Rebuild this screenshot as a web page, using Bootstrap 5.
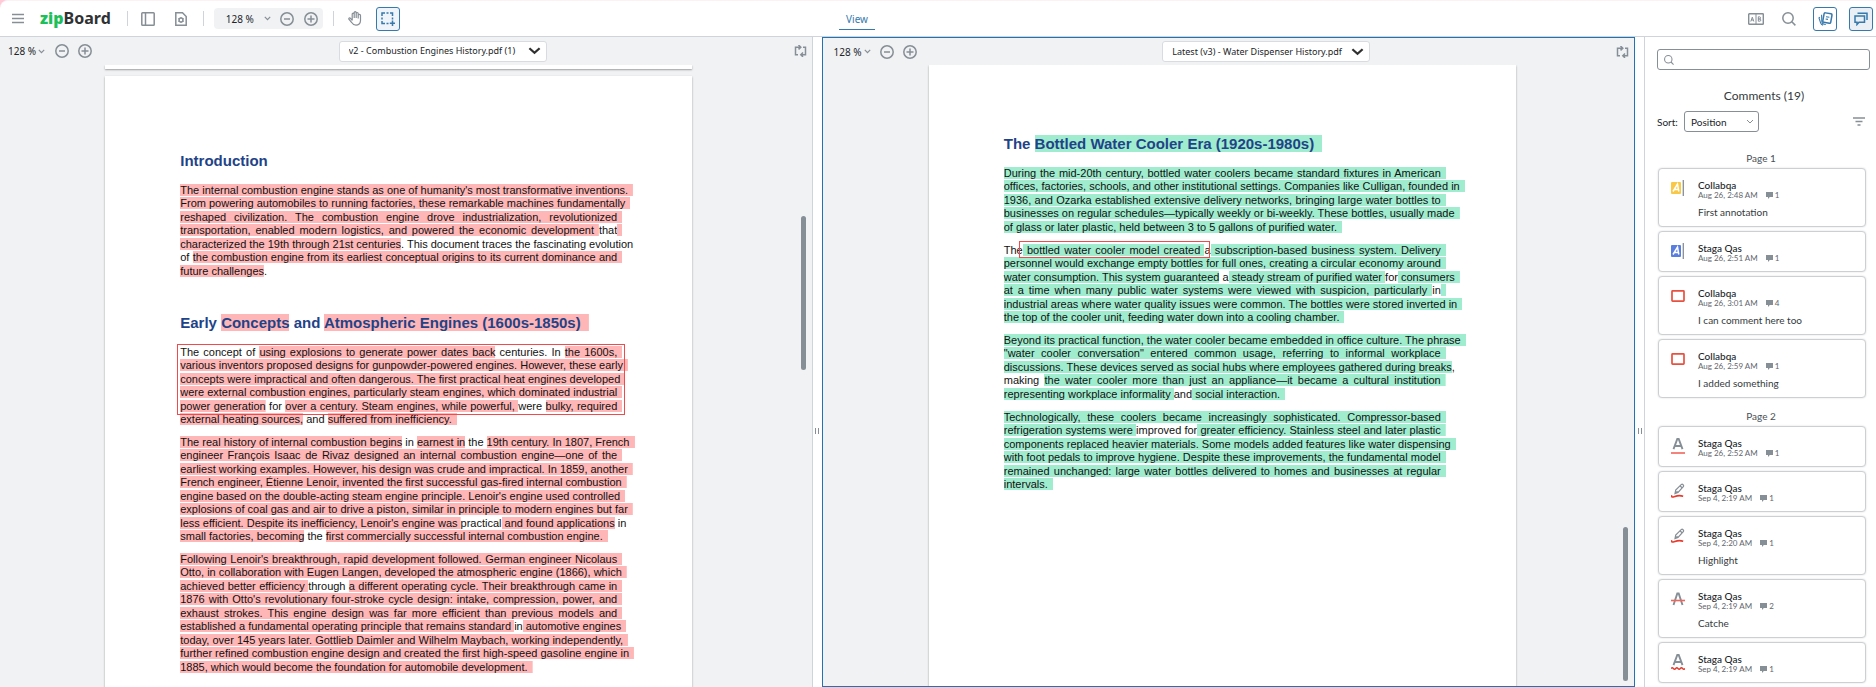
<!DOCTYPE html>
<html lang="en">
<head>
<meta charset="utf-8">
<meta name="viewport" content="width=device-width, initial-scale=1">
<title>zipBoard</title>
<link rel="stylesheet" href="https://cdn.jsdelivr.net/npm/bootstrap@5.3.0/dist/css/bootstrap.min.css">
<style>
:root { --line:#cfd4da; --ico:#868e96; --blue:#3579ad; --pane:#f1f2f4; --ink:#343a40; }
body { height:100vh; font-family:Lato,"Liberation Sans",sans-serif; font-size:10px; line-height:14px; color:#212529; background:#ffc9d6; }
svg { display:block; fill:none; stroke:var(--ico); stroke-width:1.5; flex:none; }
.shell { border-top:1px solid #fdf1f4; border-top-left-radius:8px; background:#fff; }
.topbar { height:36px; border-bottom:1px solid var(--line); padding:0 3px 0 12px; }
.topbar > .side { flex:1 1 0; }
.brand { font:bold 16px/20px "Noto Sans",sans-serif; color:#2f3133; text-decoration:none; margin-left:16px; padding-bottom:2px; }
.brand b { color:#1dbf5b; }
.ibtn { border:0; background:none; padding:0; display:flex; align-items:center; justify-content:center; }
.vsep { width:1px; height:15px; background:var(--line); }
.zoomset { font:10px/14px "Noto Sans",sans-serif; color:#212529; }
.zoomset .ibtn { color:inherit; gap:2px; }
.zoompill { background:var(--pane); border-radius:4px; height:21px; padding:0 5px 0 12px; width:109px; }
.sel { width:24px; height:24px; border:1px solid var(--blue); border-radius:3px; background:#eef4fa; }
.sel svg { stroke:var(--blue); }
.tab { font:10px/14px "Noto Sans",sans-serif; color:var(--blue); border-bottom:1px solid var(--blue); text-decoration:none; padding:0 7px 3px; margin:4px 171px 0 0; }
.pane { flex:1 1 0; min-width:0; background:var(--pane); position:relative; }
.pane.old { border-right:1px solid var(--line); }
.pane.now { flex-basis:2px; border:1px solid #2273b4; }
.panebar { height:28px; padding:0 5px 0 8px; }
.now .panebar { height:27px; padding-left:11px; }
.pick { width:208px; height:21px; min-height:0; padding:0 26px 0 9px; font:9px/18px "Noto Sans",sans-serif; color:#212529; border:1px solid #d8dce0; border-radius:3px;
  background-image:url("data:image/svg+xml,%3csvg xmlns='http://www.w3.org/2000/svg' viewBox='0 0 14 8'%3e%3cpath fill='none' stroke='%23303030' stroke-width='2.4' d='M1.5 1 7 6l5.5-5'/%3e%3c/svg%3e"); background-size:13px 8px; background-position:right 5px center; }
.scroller { overflow:hidden; padding-right:14px; }
.now .scroller { padding-right:12px; }
.sheet { width:587px; margin:0 auto; background:#fff; padding:0 75px; box-shadow:0 1px 2px rgba(0,0,0,.35); flex:none; }
.sheet.tail { height:4px; margin-bottom:7px; }
.sheet.main { padding-top:75px; height:1000px; }
.now .sheet.main { padding-top:69px; }
.thumb { position:absolute; right:6px; width:5px; height:154px; border-radius:3px; background:#868e96; }
.old .thumb { top:179px; } .now .thumb { bottom:5px; }
.grip { width:9px; background:#fff; }
.grip i { width:1px; height:6px; background:#868e96; }
.doc { font-family:"Liberation Sans",Arial,sans-serif; color:#111; }
.doc h2 { font-size:15px; line-height:20px; font-weight:bold; color:#1f4388; margin:0; }
.doc p { position:relative; margin:0 0 10px; font-size:11px; line-height:13px; }
.doc .ln { display:block; white-space:nowrap; text-align:justify; text-align-last:justify; }
.doc .ln:nth-of-type(even) { margin-bottom:1px; }
.doc .fin { text-align-last:left; }
.doc mark { color:inherit; padding:0; background:linear-gradient(var(--hl),var(--hl)) center / 100% 12px no-repeat; }
.doc h2 mark { background-size:100% 18px; }
.doc mark.e { padding-right:5px; margin-right:-5px; }
.doc h2 mark.e { padding-right:8px; }
.doc h2 + p { margin-top:13px; }
.doc p.intro { margin-bottom:35px; }
.old { --hl:#ffb6b6; } .now { --hl:#a0ecce; }
.note { position:absolute; border:1px solid #f04a4a; }
.note.big { left:-3px; right:-8px; top:-2px; height:71px; }
.note.slim { left:15px; width:191px; top:-3px; height:17px; }
.comments { width:232px; border-left:1px solid var(--line); padding:12px 6px 0 12px; background:#fff; overflow:hidden; }
.find { position:relative; }
.find svg { position:absolute; left:7px; top:6px; }
.find input { height:21px; min-height:0; border:1px solid #868e96; border-radius:3px; padding:0 6px 0 22px; font-size:10px; }
.comments h1 { font-size:12px; line-height:16px; margin:18px 0 0; color:#343a40; text-align:center; font-weight:400; padding-left:1px; }
.order { width:75px; height:21px; min-height:0; padding:0 18px 0 6px; font-size:10px; line-height:18px; color:#212529; border:1px solid #868e96; border-radius:3px;
  background-image:url("data:image/svg+xml,%3csvg xmlns='http://www.w3.org/2000/svg' viewBox='0 0 8 6'%3e%3cpath fill='none' stroke='%23868e96' d='M1 1l3 3 3-3'/%3e%3c/svg%3e"); background-size:8px 6px; background-position:right 4px center; }
.pg { font-size:10px; line-height:14px; color:#495057; text-align:center; margin:0 0 3px; font-weight:400; padding-right:5px; }
.item { border:1px solid #cdd0d3; border-radius:4px; box-shadow:0 0 2px rgba(0,0,0,.15); margin:0 4px 4px 1px; padding:11px 12px 0 12px; min-height:41px; gap:13px; background:#fff; }
.item.tall { height:59px; }
.who { font-size:10px; line-height:11px; font-weight:500; color:#212529; }
.when { font-size:8px; line-height:9px; color:#5f666d; gap:8px; }
.when > span { gap:2px; }
.said { font-size:10px; line-height:14px; color:#343a40; margin:5px 0 0; }
</style>
</head>
<body>
<svg width="0" height="0" class="position-absolute" aria-hidden="true">
  <symbol id="minus" viewBox="0 0 14 14"><circle cx="7" cy="7" r="6.2"/><path d="M4 7h6"/></symbol>
  <symbol id="plus" viewBox="0 0 14 14"><circle cx="7" cy="7" r="6.2"/><path d="M3.5 7h7M7 3.5v7"/></symbol>
  <symbol id="chev" viewBox="0 0 7 5"><path d="M.8.8l2.7 2.8L6.2.8" stroke-width="1.2"/></symbol>
  <symbol id="swap" viewBox="0 0 13 12"><path d="M6 2.2H1.5v7.5H4M7.500 9.700H11.500V2.200H9M4.500 0l2.300 2.200-2.300 2.200M9 7.500L6.800 9.700 9 11.900"/></symbol>
  <symbol id="glass" viewBox="0 0 14 14"><circle cx="6" cy="6" r="5.200"/><path d="M9.800 9.800l3.600 3.600"/></symbol>
  <symbol id="bubble" viewBox="0 0 7 7"><path d="M0 0h7v5H3.800L2 7V5H0z" fill="#868e96" stroke="none"/></symbol>
  <symbol id="rect" viewBox="0 0 14 14"><rect x="1" y="1.800" width="12" height="10.400" rx=".6" stroke="#e8503f" stroke-width="1.700"/></symbol>
  <symbol id="pen" viewBox="0 0 14 15"><path d="M4 10l.7-3.500L10.400.9q.8-.5 1.700.3t.4 1.700L7 8.900zM9 2.300l2.300 2.200M4 10l2.500-2.400" stroke-width="1.200"/><path d="M.8 11.800q-.8 2 1.600 1.700c2-.4 4-2.400 9.800-.8" stroke="#e8392b" stroke-width="1.600"/></symbol>
  <symbol id="under" viewBox="0 0 14 16"><path d="M2.500 11.200L6.300 1h1.400l3.800 10.200M4 8h6" stroke-width="1.900"/><path d="M0 15h14" stroke="#f0655a" stroke-width="1.600"/></symbol>
  <symbol id="strike" viewBox="0 0 14 14"><path d="M2.500 13L6.300 1.500h1.400L11.500 13" stroke-width="1.900"/><path d="M0 8.500h14" stroke="#f0655a" stroke-width="1.600"/></symbol>
  <symbol id="wave" viewBox="0 0 14 16"><path d="M2.500 11.200L6.300 1h1.400l3.800 10.200M4 8h6" stroke-width="1.900"/><path d="M0 14.500q1.200-1.600 2.400 0t2.300 0 2.300 0 2.300 0 2.300 0 2.300 0" stroke="#e8392b" stroke-width="1.400"/></symbol>
</svg>

<div class="shell d-flex flex-column h-100">
  <header class="topbar d-flex align-items-center flex-shrink-0">
    <div class="side d-flex align-items-center">
      <button class="ibtn" aria-label="Menu"><svg width="12" height="11" viewBox="0 0 12 11"><path d="M0 1.500h12M0 5.500h12M0 9.500h12"/></svg></button>
      <a class="brand" href="#"><b>zip</b>Board</a>
      <span class="vsep ms-3"></span>
      <button class="ibtn" style="margin-left:13px" aria-label="Toggle panel"><svg width="14" height="14" viewBox="0 0 14 14"><rect x=".8" y=".8" width="12.400" height="12.400" rx=".8"/><path d="M4.500 1v12"/></svg></button>
      <button class="ibtn" style="margin-left:20px" aria-label="Document settings"><svg width="12" height="14" viewBox="0 0 12 14"><path d="M.8.8h6.700l3.700 3.700v8.700H.8z"/><circle cx="6" cy="8" r="2"/><path d="M6 5v1M6 10v1M3.400 6.500l.9.500M7.700 9l.9.500M3.400 9.500l.9-.5M7.700 7l.9-.5" stroke-width="1"/></svg></button>
      <span class="vsep ms-3"></span>
      <div class="zoomset zoompill d-flex align-items-center justify-content-between" style="margin-left:10px">
        <span>128 %</span>
        <button class="ibtn" aria-label="Zoom levels"><svg width="7" height="5"><use href="#chev"/></svg></button>
        <button class="ibtn" aria-label="Zoom out"><svg width="14" height="14"><use href="#minus"/></svg></button>
        <button class="ibtn" aria-label="Zoom in"><svg width="14" height="14"><use href="#plus"/></svg></button>
      </div>
      <span class="vsep" style="margin-left:10px"></span>
      <button class="ibtn" style="margin-left:14px" aria-label="Pan"><svg width="14" height="15" viewBox="0 0 14 15"><path d="M4.200 9.500V3.200a1 1 0 0 1 2 0V7M6.200 6.500V1.700a1 1 0 0 1 2 0V7M8.200 6.500V2.500a1 1 0 0 1 2 0V7.500M10.200 7V4.500a1 1 0 0 1 2.300 0V9.500c0 3-2 4.700-4.500 4.700-2.200 0-3.300-1-4.300-2.700L.9 8.200c-.4-1 .8-1.700 1.600-.9l1.700 2" stroke-width="1.200"/></svg></button>
      <button class="ibtn sel" style="margin-left:14px" aria-label="Select area"><svg width="14" height="14" viewBox="0 0 14 14"><path d="M1 4V1h3M5.500 1h2M9 1h2.500v3M11.500 5.500v2M1 5.500v2M1 9v2.500h3M5.500 11.500h2M11.500 8.500v5.500M8.800 11.300h5.200"/></svg></button>
    </div>
    <a class="tab" href="#">View</a>
    <div class="side d-flex align-items-center justify-content-end">
      <button class="ibtn" aria-label="Compare text"><svg width="16" height="12" viewBox="0 0 16 12"><rect x=".7" y=".7" width="14.600" height="10.600" rx=".6" stroke-width="1.400"/><path d="M8 1v10M2.800 8.500l1.500-4.300 1.500 4.300M3.300 7h2M10.300 3.800v4.400h1.500q1 0 1-1.100T11.700 6h-1.400 1.300q.9 0 .9-1.100t-.9-1.100z" stroke-width="1"/></svg></button>
      <button class="ibtn" style="margin-left:18px" aria-label="Search"><svg width="14" height="14"><use href="#glass"/></svg></button>
      <button class="ibtn sel" style="margin-left:17px;background:#fff" aria-label="Overlay"><svg width="15" height="14" viewBox="0 0 15 14"><rect x="5.400" y="1.300" width="8" height="9.600" rx="1.200" transform="rotate(10 9.400 6)"/><path d="M3.600 2.800l.2 6.400q.2 2.600 2.500 3l1.500.3M1.900 5.300L1 6l1.600 4.800q.5 1.700 2.500 2.300M8 4.700l3.400.5M7.600 7l2.400.4" stroke-width="1.100"/></svg></button>
      <button class="ibtn sel" style="margin-left:12px;background:#e9eff5" aria-label="Comments"><svg width="14" height="14" viewBox="0 0 14 14"><path d="M1 4h9.500v6.300H5L3 12.500v-2.200H1zM3.500 1.200H13V8"/></svg></button>
    </div>
  </header>

  <main class="d-flex flex-grow-1" style="min-height:0">
    <section class="pane old d-flex flex-column">
      <div class="panebar zoomset d-flex align-items-center flex-shrink-0">
        <button class="ibtn" aria-label="Zoom levels">128 %<svg width="7" height="5"><use href="#chev"/></svg></button>
        <button class="ibtn" style="margin-left:10px" aria-label="Zoom out"><svg width="14" height="14"><use href="#minus"/></svg></button>
        <button class="ibtn" style="margin-left:9px" aria-label="Zoom in"><svg width="14" height="14"><use href="#plus"/></svg></button>
        <div class="flex-grow-1 d-flex justify-content-center"><select class="form-select pick" aria-label="Left document"><option>v2 - Combustion Engines History.pdf (1)</option></select></div>
        <button class="ibtn" aria-label="Swap"><svg width="13" height="12"><use href="#swap"/></svg></button>
      </div>
      <div class="scroller doc flex-grow-1">
        <div class="sheet tail"></div>
        <article class="sheet main">
          <h2>Introduction</h2>
          <p class="intro">
            <span class="ln"><mark class="e">The internal combustion engine stands as one of humanity's most transformative inventions.</mark></span>
            <span class="ln"><mark class="e">From powering automobiles to running factories, these remarkable machines fundamentally</mark></span>
            <span class="ln"><mark class="e">reshaped civilization. The combustion engine drove industrialization, revolutionized</mark></span>
            <span class="ln"><mark>transportation, enabled modern logistics, and powered the economic development </mark>that<mark class="e"></mark></span>
            <span class="ln"><mark>characterized the 19th through 21st centuries</mark>. This document traces the fascinating evolution</span>
            <span class="ln">of <mark class="e">the combustion engine from its earliest conceptual origins to its current dominance and</mark></span>
            <span class="ln fin"><mark>future challenges</mark>.</span>
          </p>
          <h2>Early <mark>Concepts</mark> and <mark class="e">Atmospheric Engines (1600s-1850s)</mark></h2>
          <p>
            <span class="ln">The concept of <mark>using explosions to generate power dates back</mark> centuries. In <mark class="e">the 1600s,</mark></span>
            <span class="ln"><mark class="e">various inventors proposed designs for gunpowder-powered engines. However, these early</mark></span>
            <span class="ln"><mark class="e">concepts were impractical and often dangerous. The first practical heat engines developed</mark></span>
            <span class="ln"><mark class="e">were external combustion engines, particularly steam engines, which dominated industrial</mark></span>
            <span class="ln"><mark>power generation</mark> for <mark>over a century. Steam engines, while powerful, </mark>were <mark class="e">bulky, required</mark></span>
            <span class="ln fin"><mark>external heating sources,</mark> and <mark class="e">suffered from inefficiency.</mark></span>
            <span class="note big"></span>
          </p>
          <p>
            <span class="ln"><mark>The real history of internal combustion begins</mark> in <mark>earnest in</mark> the <mark class="e">19th century. In 1807, French</mark></span>
            <span class="ln"><mark class="e">engineer François Isaac de Rivaz designed an internal combustion engine—one of the</mark></span>
            <span class="ln"><mark class="e">earliest working examples. However, his design was crude and impractical. In 1859, another</mark></span>
            <span class="ln"><mark class="e">French engineer, Étienne Lenoir, invented the first successful gas-fired internal combustion</mark></span>
            <span class="ln"><mark class="e">engine based on the double-acting steam engine principle. Lenoir's engine used controlled</mark></span>
            <span class="ln"><mark class="e">explosions of coal gas and air to drive a piston, similar in principle to modern engines but far</mark></span>
            <span class="ln"><mark>less efficient. Despite its inefficiency, Lenoir's engine was </mark>practical<mark> and found applications</mark> in</span>
            <span class="ln fin"><mark>small factories, becoming</mark> the <mark class="e">first commercially successful internal combustion engine.</mark></span>
          </p>
          <p>
            <span class="ln"><mark class="e">Following Lenoir's breakthrough, rapid development followed. German engineer Nicolaus</mark></span>
            <span class="ln"><mark class="e">Otto, in collaboration with Eugen Langen, developed the atmospheric engine (1866), which</mark></span>
            <span class="ln"><mark>achieved better efficiency </mark>through <mark class="e">a different operating cycle. Their breakthrough came in</mark></span>
            <span class="ln"><mark class="e">1876 with Otto's revolutionary four-stroke cycle design: intake, compression, power, and</mark></span>
            <span class="ln"><mark class="e">exhaust strokes. This engine design was far more efficient than previous models and</mark></span>
            <span class="ln"><mark>established a fundamental operating principle that remains standard </mark>in<mark class="e"> automotive engines</mark></span>
            <span class="ln"><mark class="e">today, over 145 years later. Gottlieb Daimler and Wilhelm Maybach, working independently,</mark></span>
            <span class="ln"><mark class="e">further refined combustion engine design and created the first high-speed gasoline engine in</mark></span>
            <span class="ln fin"><mark class="e">1885, which would become the foundation for automobile development.</mark></span>
          </p>
        </article>
      </div>
      <span class="thumb"></span>
    </section>

    <div class="grip d-flex align-items-center justify-content-center flex-shrink-0" style="gap:2px;padding-top:138px"><i></i><i></i></div>

    <section class="pane now d-flex flex-column">
      <div class="panebar zoomset d-flex align-items-center flex-shrink-0">
        <button class="ibtn" aria-label="Zoom levels">128 %<svg width="7" height="5"><use href="#chev"/></svg></button>
        <button class="ibtn" style="margin-left:9px" aria-label="Zoom out"><svg width="14" height="14"><use href="#minus"/></svg></button>
        <button class="ibtn" style="margin-left:9px" aria-label="Zoom in"><svg width="14" height="14"><use href="#plus"/></svg></button>
        <div class="flex-grow-1 d-flex justify-content-center"><select class="form-select pick" aria-label="Right document"><option>Latest (v3) - Water Dispenser History.pdf</option></select></div>
        <button class="ibtn" aria-label="Swap"><svg width="13" height="12"><use href="#swap"/></svg></button>
      </div>
      <div class="scroller doc flex-grow-1">
        <article class="sheet main">
          <h2>The <mark class="e">Bottled Water Cooler Era (1920s-1980s)</mark></h2>
          <p>
            <span class="ln"><mark class="e">During the mid-20th century, bottled water coolers became standard fixtures in American</mark></span>
            <span class="ln"><mark class="e">offices, factories, schools, and other institutional settings. Companies like Culligan, founded in</mark></span>
            <span class="ln"><mark class="e">1936, and Ozarka established extensive delivery networks, bringing large water bottles to</mark></span>
            <span class="ln"><mark class="e">businesses on regular schedules—typically weekly or bi-weekly. These bottles, usually made</mark></span>
            <span class="ln fin"><mark class="e">of glass or later plastic, held between 3 to 5 gallons of purified water.</mark></span>
          </p>
          <p>
            <span class="ln">The<mark> bottled water cooler model created </mark>a<mark class="e"> subscription-based business system. Delivery</mark></span>
            <span class="ln"><mark class="e">personnel would exchange empty bottles for full ones, creating a circular economy around</mark></span>
            <span class="ln"><mark>water consumption. This system guaranteed</mark> a<mark> steady stream of purified water </mark>for<mark class="e"> consumers</mark></span>
            <span class="ln"><mark>at a time when many public water systems were viewed with suspicion, particularly </mark>in<mark class="e"></mark></span>
            <span class="ln"><mark class="e">industrial areas where water quality issues were common. The bottles were stored inverted in</mark></span>
            <span class="ln fin"><mark class="e">the top of the cooler unit, feeding water down into a cooling chamber.</mark></span>
            <span class="note slim"></span>
          </p>
          <p>
            <span class="ln"><mark class="e">Beyond its practical function, the water cooler became embedded in office culture. The phrase</mark></span>
            <span class="ln"><mark class="e">"water cooler conversation" entered common usage, referring to informal workplace</mark></span>
            <span class="ln"><mark>discussions. These devices served as social hubs where employees gathered during breaks</mark>,</span>
            <span class="ln">making <mark class="e">the water cooler more than just an appliance—it became a cultural institution</mark></span>
            <span class="ln fin"><mark>representing workplace informality </mark>and<mark class="e"> social interaction.</mark></span>
          </p>
          <p>
            <span class="ln"><mark class="e">Technologically, these coolers became increasingly sophisticated. Compressor-based</mark></span>
            <span class="ln"><mark>refrigeration systems were </mark>improved for<mark class="e"> greater efficiency. Stainless steel and later plastic</mark></span>
            <span class="ln"><mark class="e">components replaced heavier materials. Some models added features like water dispensing</mark></span>
            <span class="ln"><mark class="e">with foot pedals to improve hygiene. Despite these improvements, the fundamental model</mark></span>
            <span class="ln"><mark class="e">remained unchanged: large water bottles delivered to homes and businesses at regular</mark></span>
            <span class="ln fin"><mark class="e">intervals.</mark></span>
          </p>
        </article>
      </div>
      <span class="thumb"></span>
    </section>

    <div class="grip d-flex align-items-center justify-content-center flex-shrink-0" style="gap:2px;padding-top:138px"><i></i><i></i></div>

    <aside class="comments flex-shrink-0">
      <label class="find d-block"><svg width="10" height="10" viewBox="0 0 14 14"><use href="#glass"/></svg><input type="search" class="form-control" aria-label="Search comments"></label>
      <h1>Comments (19)</h1>
      <div class="d-flex align-items-center" style="margin:7px 5px 19px 0">
        <label for="order" style="width:27px">Sort:</label>
        <select id="order" class="form-select order"><option>Position</option></select>
        <button class="ibtn ms-auto" aria-label="Filter"><svg width="12" height="9" viewBox="0 0 12 9"><path d="M0 1h12M2.500 4.500h7M4.500 8h3"/></svg></button>
      </div>
      <h2 class="pg">Page 1</h2>
      <div class="item tall d-flex">
        <svg width="14" height="16" viewBox="0 0 14 16"><rect y="2" width="10" height="12" rx="1" fill="#f9c846" stroke="none"/><path d="M2 11.500L6.500 4l1.300 7.500M3.500 9.500h4" stroke="#fff"/><path d="M12.300 0v16" stroke-width="1.300"/></svg>
        <div><div class="who">Collabqa</div><div class="when d-flex"><span>Aug 26, 2:48 AM</span><span class="d-flex align-items-center"><svg width="7" height="7"><use href="#bubble"/></svg>1</span></div><p class="said">First annotation</p></div>
      </div>
      <div class="item d-flex">
        <svg width="14" height="16" viewBox="0 0 14 16"><rect y="2" width="10" height="12" rx="1" fill="#5a7de0" stroke="none"/><path d="M2 11.500L6.500 4l1.300 7.500M3.500 9.500h4" stroke="#fff"/><path d="M12.300 0v16" stroke-width="1.300"/></svg>
        <div><div class="who">Staga Qas</div><div class="when d-flex"><span>Aug 26, 2:51 AM</span><span class="d-flex align-items-center"><svg width="7" height="7"><use href="#bubble"/></svg>1</span></div></div>
      </div>
      <div class="item tall d-flex">
        <svg width="14" height="16"><use href="#rect"/></svg>
        <div><div class="who">Collabqa</div><div class="when d-flex"><span>Aug 26, 3:01 AM</span><span class="d-flex align-items-center"><svg width="7" height="7"><use href="#bubble"/></svg>4</span></div><p class="said">I can comment here too</p></div>
      </div>
      <div class="item tall d-flex">
        <svg width="14" height="16"><use href="#rect"/></svg>
        <div><div class="who">Collabqa</div><div class="when d-flex"><span>Aug 26, 2:59 AM</span><span class="d-flex align-items-center"><svg width="7" height="7"><use href="#bubble"/></svg>1</span></div><p class="said">I added something</p></div>
      </div>
      <h2 class="pg" style="margin-top:11px">Page 2</h2>
      <div class="item d-flex">
        <svg width="14" height="16"><use href="#under"/></svg>
        <div><div class="who">Staga Qas</div><div class="when d-flex"><span>Aug 26, 2:52 AM</span><span class="d-flex align-items-center"><svg width="7" height="7"><use href="#bubble"/></svg>1</span></div></div>
      </div>
      <div class="item d-flex">
        <svg width="14" height="16"><use href="#pen"/></svg>
        <div><div class="who">Staga Qas</div><div class="when d-flex"><span>Sep 4, 2:19 AM</span><span class="d-flex align-items-center"><svg width="7" height="7"><use href="#bubble"/></svg>1</span></div></div>
      </div>
      <div class="item tall d-flex">
        <svg width="14" height="16"><use href="#pen"/></svg>
        <div><div class="who">Staga Qas</div><div class="when d-flex"><span>Sep 4, 2:20 AM</span><span class="d-flex align-items-center"><svg width="7" height="7"><use href="#bubble"/></svg>1</span></div><p class="said">Highlight</p></div>
      </div>
      <div class="item tall d-flex">
        <svg width="14" height="16"><use href="#strike"/></svg>
        <div><div class="who">Staga Qas</div><div class="when d-flex"><span>Sep 4, 2:19 AM</span><span class="d-flex align-items-center"><svg width="7" height="7"><use href="#bubble"/></svg>2</span></div><p class="said">Catche</p></div>
      </div>
      <div class="item d-flex">
        <svg width="14" height="16"><use href="#wave"/></svg>
        <div><div class="who">Staga Qas</div><div class="when d-flex"><span>Sep 4, 2:19 AM</span><span class="d-flex align-items-center"><svg width="7" height="7"><use href="#bubble"/></svg>1</span></div></div>
      </div>
    </aside>
  </main>
</div>
<script src="https://cdn.jsdelivr.net/npm/bootstrap@5.3.0/dist/js/bootstrap.bundle.min.js"></script>
</body>
</html>
